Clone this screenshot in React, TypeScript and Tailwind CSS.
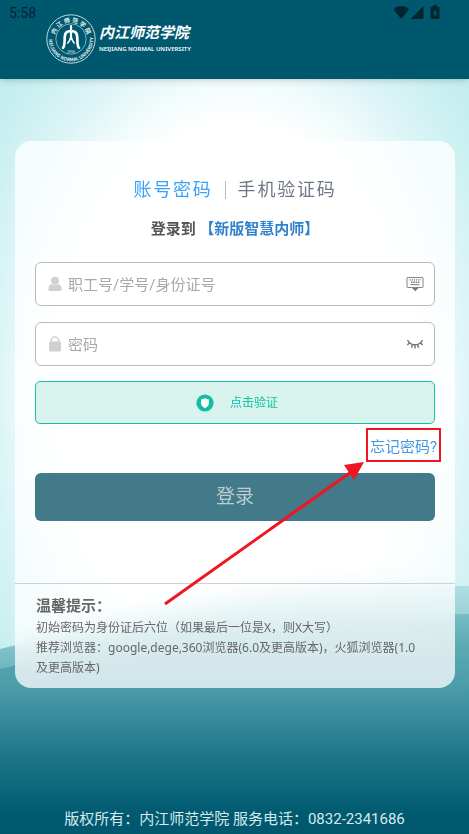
import type { ReactNode } from "react";

const Emblem = () => (
  <svg viewBox="0 0 50 50" className="size-[50px] shrink-0" fill="none" aria-hidden="true">
    <defs>
      <path id="ring-top" d="M8.500 25a16.500 16.500 0 0 1 33 0" />
      <path id="ring-bottom" d="M2.900 23A22.200 22.200 0 1 0 47.100 23" />
    </defs>
    <circle cx="25" cy="25" r="24.2" stroke="#d5e8ec" strokeWidth="0.9" />
    <circle cx="25" cy="25" r="15.2" stroke="#9fc6cf" strokeWidth="0.8" />
    <g fill="#e6f2f4" textAnchor="middle" fontFamily="Noto Sans CJK SC, sans-serif">
      <text fontSize="6" fontWeight="700">
        <textPath href="#ring-top" startOffset="50%">
          内 江 师 范 学 院
        </textPath>
      </text>
      <g fontSize="4.6" fontWeight="700">
        <text>
          <textPath href="#ring-bottom" startOffset="18%">
            NEIJIANG
          </textPath>
        </text>
        <text>
          <textPath href="#ring-bottom" startOffset="48%">
            NORMAL
          </textPath>
        </text>
        <text>
          <textPath href="#ring-bottom" startOffset="81%">
            UNIVERSITY
          </textPath>
        </text>
      </g>
      <text x="25" y="39" fontSize="3.4">
        1956
      </text>
    </g>
    <g stroke="#fff" strokeLinecap="round" strokeLinejoin="round">
      <path d="M25 12v9" strokeWidth="2.2" />
      <path d="M17 33.800c1.300-1.300 1.600-4 1.600-7.800 0-6 .8-9 6.400-9s6.400 3 6.400 9c0 3.800.3 6.500 1.600 7.800" strokeWidth="2.6" />
      <path d="M25 20c0 4-1 6.500-3.200 9M25 20c0 4 1 6.500 3.200 9" strokeWidth="1.6" />
    </g>
  </svg>
);

const StatusIcons = () => (
  <svg viewBox="0 0 48 16" className="h-4 w-12" fill="#02252f" aria-hidden="true">
    <path d="M.5 4.500C4-.1 12.500-.1 16 4.500L8.250 14z" />
    <path d="M30.500 1v13h-13z" />
    <path
      fillRule="evenodd"
      d="M40 .2h4v1.600h1.500q1 0 1 1V13q0 1-1 1h-7q-1 0-1-1V2.800q0-1 1-1H40zM42.600 4.200l-3 4.300h1.900v3.600l3-4.400h-1.900z"
    />
  </svg>
);

const Backdrop = () => (
  <svg
    viewBox="0 0 469 834"
    preserveAspectRatio="none"
    className="absolute inset-0 -z-10 size-full"
    aria-hidden="true"
  >
    <defs>
      <radialGradient
        id="glow"
        cx="0"
        cy="0"
        r="1"
        gradientUnits="userSpaceOnUse"
        gradientTransform="translate(235 390) scale(300 460)"
      >
        <stop offset="0.58" stopColor="#fff" />
        <stop offset="0.66" stopColor="#f3fcfc" />
        <stop offset="0.78" stopColor="#def5f7" />
        <stop offset="0.95" stopColor="#c9eff0" />
        <stop offset="1" stopColor="#c5edef" />
      </radialGradient>
      <linearGradient id="hill" x1="0" y1="586" x2="0" y2="834" gradientUnits="userSpaceOnUse">
        <stop offset="0" stopColor="#8ecdd2" />
        <stop offset="0.25" stopColor="#5aa9b2" />
        <stop offset="0.41" stopColor="#4b9ca9" />
        <stop offset="0.7" stopColor="#1c7487" />
        <stop offset="0.92" stopColor="#005a70" />
        <stop offset="1" stopColor="#00586f" />
      </linearGradient>
      <linearGradient id="ridge" x1="0" y1="586" x2="0" y2="670" gradientUnits="userSpaceOnUse">
        <stop offset="0" stopColor="#afdfe3" />
        <stop offset="1" stopColor="#6fb6bf" />
      </linearGradient>
    </defs>
    <rect width="469" height="834" fill="url(#glow)" />
    <path d="M0 649Q120 618 260 596Q360 584 469 586V834H0z" fill="url(#ridge)" />
    <path d="M0 669Q130 637 260 623Q360 614 469 614V834H0z" fill="url(#hill)" />
  </svg>
);

const UserIcon = () => (
  <svg viewBox="0 0 14 16" className="h-4 w-3.5" fill="#d0d0d0" aria-hidden="true">
    <circle cx="7" cy="4.800" r="4" />
    <path d="M.5 12.500Q.5 8.500 3.800 8.200q3.200 2 6.400 0 3.300.3 3.300 4.300v1.200q0 1.300-1.300 1.300H1.800Q.5 15 .5 13.700z" />
  </svg>
);

const LockIcon = () => (
  <svg viewBox="0 0 14 16" className="h-4 w-3.5" fill="none" aria-hidden="true">
    <path d="M3 7V5a4 4 0 0 1 8 0V7" stroke="#d0d0d0" strokeWidth="1.500" />
    <rect x="1" y="5.500" width="12" height="10" rx="1.700" fill="#d0d0d0" />
  </svg>
);

const KeyboardIcon = () => (
  <svg viewBox="0 0 18 16" className="h-4 w-[18px]" fill="none" stroke="#777" aria-hidden="true">
    <rect x="1" y="1.500" width="16" height="10" rx="0.500" strokeWidth="0.900" />
    <path d="M3.500 3.900h11.500" strokeDasharray="1.200 1" strokeWidth="1.300" />
    <path d="M5 6.200h8.500" strokeDasharray="1.500 0.800" strokeWidth="1.500" />
    <path d="M4.500 8.700h9" strokeWidth="1" />
    <path d="M6 12h6.500L9.250 15.200z" fill="#777" stroke="none" />
  </svg>
);

const ClosedEyeIcon = () => (
  <svg viewBox="0 0 18 12" className="h-3 w-[18px]" fill="none" stroke="#737373" strokeWidth="1.400" aria-hidden="true">
    <path d="M1.500 2Q4 6.800 9 6.800T16.500 2" />
    <path d="M3.700 4.800L1.300 7M6.500 6.500L5.500 9.800M9 6.800V10.500M11.500 6.500L12.500 9.800M14.300 4.800L16.700 7" />
  </svg>
);

const ShieldIcon = () => (
  <svg viewBox="0 0 18 18" className="size-[18px]" aria-hidden="true">
    <circle cx="9" cy="9" r="8.600" fill="#12bfa3" />
    <path d="M9 4.300Q10.800 5.400 13 5.500V9q0 3.200-4 5.200Q5 12.200 5 9V5.500Q7.200 5.400 9 4.300z" fill="#fff" />
  </svg>
);

type FieldProps = {
  id: string;
  type: string;
  label: string;
  icon: ReactNode;
  actionLabel: string;
  actionIcon: ReactNode;
};

const Field = ({ id, type, label, icon, actionLabel, actionIcon }: FieldProps) => (
  <div className="flex h-11 items-center rounded-md border border-[#b9b9b9] bg-white px-2.5">
    <label htmlFor={id} aria-label={label} className="mx-0.5 shrink-0">
      {icon}
    </label>
    <input
      id={id}
      type={type}
      placeholder={label}
      className="ml-1 min-w-0 flex-1 bg-transparent pt-0.5 text-[15px] text-gray-700 outline-none placeholder:text-[#a8a8a8]"
    />
    <button type="button" aria-label={actionLabel} className="shrink-0">
      {actionIcon}
    </button>
  </div>
);

const App = () => {
  return (
    <div className="relative isolate flex min-h-screen flex-col font-[Roboto,'Noto_Sans_CJK_SC',sans-serif]">
      <Backdrop />
      <header className="flex h-[79px] items-start bg-[#00586f] shadow-md">
        <span className="mt-[3px] ml-[9px] w-[37px] text-sm leading-5 text-[#02252f]">5:58</span>
        <div className="mt-3.5 flex items-center gap-[3px] text-white">
          <Emblem />
          <div className="whitespace-nowrap">
            <div className="text-[15px] leading-5 font-bold italic">内江师范学院</div>
            <div className="font-['Noto_Sans'] text-[6px] leading-3 font-semibold">
              NEIJIANG NORMAL UNIVERSITY
            </div>
          </div>
        </div>
        <div className="mt-[5px] mr-7 ml-auto">
          <StatusIcons />
        </div>
      </header>

      <main className="mt-[62px] mr-3.5 ml-[15px] overflow-hidden rounded-2xl bg-white/75 backdrop-blur-md">
        <form className="px-5 pt-[37px]" onSubmit={(e) => e.preventDefault()}>
          <div className="flex items-center justify-center gap-3 text-lg leading-6 tracking-widest">
            <button type="button" className="text-[#3da1fb]">
              账号密码
            </button>
            <span className="h-[18px] w-px bg-[#b5b8bf]" />
            <button type="button" className="text-[#707887]">
              手机验证码
            </button>
          </div>
          <h1 className="mt-[15px] text-center text-[15px] leading-6 font-bold text-[#555]">
            登录到 <span className="text-[#3182ce]">【新版智慧内师】</span>
          </h1>

          <div className="mt-[21px] flex flex-col gap-4">
            <Field
              id="account"
              type="text"
              label="职工号/学号/身份证号"
              icon={<UserIcon />}
              actionLabel="键盘"
              actionIcon={<KeyboardIcon />}
            />
            <Field
              id="password"
              type="password"
              label="密码"
              icon={<LockIcon />}
              actionLabel="显示密码"
              actionIcon={<ClosedEyeIcon />}
            />
            <button
              type="button"
              className="-mt-px flex h-[43px] items-center justify-center gap-4 rounded-[5px] border border-[#18bfa3] bg-[#d9f3ee] pl-1 text-xs text-[#12bfa3]"
            >
              <ShieldIcon />
              点击验证
            </button>
          </div>

          <div className="-mr-1.5 mt-1 flex justify-end">
            <div className="relative border-2 border-[#ee1620] px-0.5 pt-[5px] pb-px">
              <a href="#forgot" className="block text-[15px] leading-6 text-[#4299e1]">
                忘记密码?
              </a>
              <svg
                viewBox="0 0 200 144"
                className="pointer-events-none absolute top-8 right-full mr-1 h-36 w-[200px]"
                aria-hidden="true"
              >
                <path d="M1 142L187 10" stroke="#ee1620" strokeWidth="3" />
                <path d="M200 0L180 3L190 18z" fill="#ee1620" />
              </svg>
            </div>
          </div>

          <button
            type="submit"
            className="mt-[11px] h-12 w-full rounded-md bg-[#437a89] text-[19px] text-[#b9cdd3]"
          >
            登录
          </button>
        </form>

        <section className="mt-[62px] border-t border-[#cfd0d8] px-[21px] py-2.5 text-[#666]">
          <h2 className="text-[15px] leading-6 font-bold">温馨提示：</h2>
          <p className="font-['Noto_Sans','Noto_Sans_CJK_SC',sans-serif] text-xs leading-5">
            初始密码为身份证后六位（如果最后一位是X，则X大写）
            <br />
            推荐浏览器：google,dege,360浏览器(6.0及更高版本)，火狐浏览器(1.0
            <br />
            及更高版本)
          </p>
        </section>
      </main>

      <footer className="mt-auto pb-[3px] text-center text-[15px] leading-6 text-[#d9e8ec]">
        版权所有：内江师范学院 服务电话：0832-2341686
      </footer>
    </div>
  );
};

export default App;
